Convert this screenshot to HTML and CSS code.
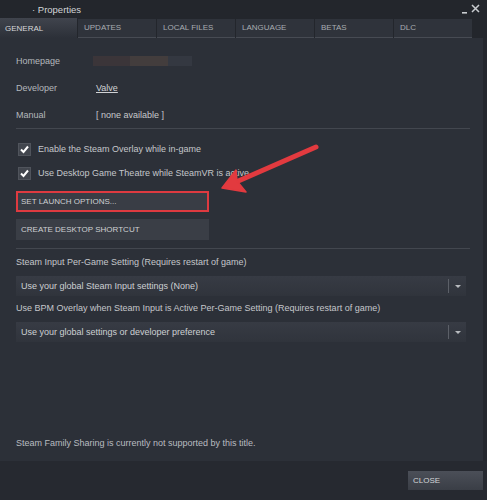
FILE: index.html
```html
<!DOCTYPE html>
<html>
<head>
<meta charset="utf-8">
<title>Properties</title>
<link rel="stylesheet" href="styles.css">
</head>
<body>
<div class="window">
  <div class="titlebar">
    <span class="title">· Properties</span>
    <div class="winbtns">
      <svg width="22" height="12" viewBox="0 0 22 12">
        <rect x="2" y="9" width="5" height="1.6" fill="#c9ccd0"/>
        <path d="M12 2 L19 9 M19 2 L12 9" stroke="#c9ccd0" stroke-width="1.5"/>
      </svg>
    </div>
  </div>
  <div class="tabs">
    <div class="tab active">GENERAL</div>
    <div class="tab">UPDATES</div>
    <div class="tab">LOCAL FILES</div>
    <div class="tab">LANGUAGE</div>
    <div class="tab">BETAS</div>
    <div class="tab">DLC</div>
    <div class="tabfill"></div>
  </div>
  <div class="body">
    <div class="panel">
      <div class="inforow"><span class="label">Homepage</span><span class="blur"><i class="b1"></i><i class="b2"></i><i class="b3"></i></span></div>
      <div class="inforow"><span class="label">Developer</span><span class="value link">Valve</span></div>
      <div class="inforow"><span class="label">Manual</span><span class="value">[ none available ]</span></div>
      <div class="sep"></div>
      <div class="checks">
        <div class="check"><span class="box"><svg width="11" height="11" viewBox="0 0 11 11"><path d="M2 5.5 L4.5 8 L9 2.5" fill="none" stroke="#fff" stroke-width="2"/></svg></span>Enable the Steam Overlay while in-game</div>
        <div class="check"><span class="box"><svg width="11" height="11" viewBox="0 0 11 11"><path d="M2 5.5 L4.5 8 L9 2.5" fill="none" stroke="#fff" stroke-width="2"/></svg></span>Use Desktop Game Theatre while SteamVR is active</div>
      </div>
      <div class="btn highlighted">SET LAUNCH OPTIONS...</div>
      <div class="btn">CREATE DESKTOP SHORTCUT</div>
      <div class="sep sep2"></div>
      <div class="fieldlabel">Steam Input Per-Game Setting (Requires restart of game)</div>
      <div class="dropdown"><span class="ddtext">Use your global Steam Input settings (None)</span><span class="dddiv"></span><span class="ddarrow"></span></div>
      <div class="fieldlabel">Use BPM Overlay when Steam Input is Active Per-Game Setting (Requires restart of game)</div>
      <div class="dropdown"><span class="ddtext">Use your global settings or developer preference</span><span class="dddiv"></span><span class="ddarrow"></span></div>
      <div class="family">Steam Family Sharing is currently not supported by this title.</div>
    </div>
    <div class="edge"></div>
  </div>
  <div class="footer">
    <div class="closebtn">CLOSE</div>
  </div>
  <svg class="arrow" width="487" height="500" viewBox="0 0 487 500">
    <path d="M316 147 L236 182" stroke="#e23a3f" stroke-width="5" stroke-linecap="round"/>
    <path d="M222 188 L236 170 L237 181 L246 192 Z" fill="#e23a3f" stroke="#e23a3f" stroke-width="1.5" stroke-linejoin="round"/>
  </svg>
</div>
</body>
</html>
```
FILE: styles.css
```css
html, body {
  margin: 0;
  padding: 0;
  background: #24272e;
}
.window {
  position: relative;
  width: 487px;
  height: 500px;
  background: #262930;
  font-family: "Liberation Sans", Arial, sans-serif;
  font-size: 9px;
  color: #c3c6ca;
  overflow: hidden;
}
.titlebar {
  height: 18px;
  display: flex;
  align-items: center;
  justify-content: space-between;
  background: #23262c;
}
.title {
  padding-left: 32px;
  font-size: 9.5px;
  color: #d2d4d7;
  padding-top: 1px;
}
.winbtns {
  padding-right: 5px;
  display: flex;
  align-items: center;
  height: 18px;
}
.tabs {
  display: flex;
  height: 20px;
  gap: 1px;
  background: #23262c;
}
.tab {
  width: 77px;
  height: 18px;
  margin-top: 1px;
  padding-left: 6px;
  box-sizing: border-box;
  background: #2f333b;
  color: #a8acb1;
  font-size: 8px;
  line-height: 18px;
  border-bottom: 1px solid #474b53;
  box-sizing: content-box;
  width: 72px;
}
.tab.active {
  margin-top: 0;
  height: 20px;
  line-height: 21px;
  padding-left: 5px;
  width: 72px;
  border-bottom: none;
  background: linear-gradient(#40444d, #2c3038);
  color: #d6d8db;
}
.tabfill {
  flex: 1;
}
.body {
  display: flex;
  height: 423px;
}
.panel {
  flex: 1;
  background: #2c3038;
  padding: 9px 17px 11px 16px;
  display: flex;
  flex-direction: column;
}
.edge {
  width: 4px;
  background: #24272d;
}
.inforow {
  height: 27px;
  display: flex;
  align-items: center;
}
.label {
  width: 80px;
  color: #b4b8bc;
}
.value {
  color: #c7c9cc;
}
.link {
  text-decoration: underline;
  color: #d0d2d5;
}
.blur {
  display: flex;
  margin-left: -3px;
  height: 10px;
}
.blur i {
  display: block;
  height: 10px;
}
.b1 { width: 37px; background: #3b3539; }
.b2 { width: 38px; background: #433d3d; }
.b3 { width: 24px; background: #343841; }
.sep {
  height: 1px;
  background: #43474f;
  margin-right: -4px;
}
.checks {
  margin-top: 8px;
}
.check {
  height: 24px;
  display: flex;
  align-items: center;
  color: #c5c7cb;
}
.box {
  width: 13px;
  height: 13px;
  margin-left: 2px;
  margin-right: 7px;
  box-sizing: border-box;
  background: #42464e;
  border: 1px solid #50545c;
  display: flex;
  align-items: center;
  justify-content: center;
}
.btn {
  width: 193px;
  height: 21px;
  box-sizing: border-box;
  background: #3a3e46;
  color: #cfd1d4;
  font-size: 8px;
  line-height: 21px;
  padding-left: 5px;
  margin-top: 7px;
}
.btn.highlighted {
  margin-top: 6px;
  border: 2px solid #de3a40;
  line-height: 17px;
  padding-left: 3px;
  background: #393d45;
}
.sep2 {
  margin-top: 8px;
  margin-bottom: 1px;
}
.fieldlabel {
  height: 25px;
  line-height: 25px;
  color: #c5c7cb;
}
.dropdown {
  height: 20px;
  margin-top: 1px;
  width: 450px;
  display: flex;
  align-items: center;
  background: linear-gradient(#373b44, #30343c);
}
.ddtext {
  flex: 1;
  padding-left: 5px;
  color: #cdd0d3;
}
.dddiv {
  width: 1px;
  height: 14px;
  background: #5c6068;
}
.ddarrow {
  width: 0;
  height: 0;
  margin: 0 5px 0 6px;
  border-left: 3px solid transparent;
  border-right: 3px solid transparent;
  border-top: 3px solid #b8bbbf;
}
.family {
  margin-top: auto;
  line-height: 14px;
  color: #b9bcc0;
}
.footer {
  height: 39px;
  display: flex;
  justify-content: flex-end;
  align-items: flex-start;
  padding-right: 4px;
}
.closebtn {
  margin-top: 10px;
  width: 75px;
  height: 19px;
  box-sizing: border-box;
  padding-left: 5px;
  line-height: 19px;
  font-size: 8px;
  color: #d4d6d9;
  background: linear-gradient(#4b4f58, #3a3e46);
}
.arrow {
  position: absolute;
  left: 0;
  top: 0;
  pointer-events: none;
}
```
